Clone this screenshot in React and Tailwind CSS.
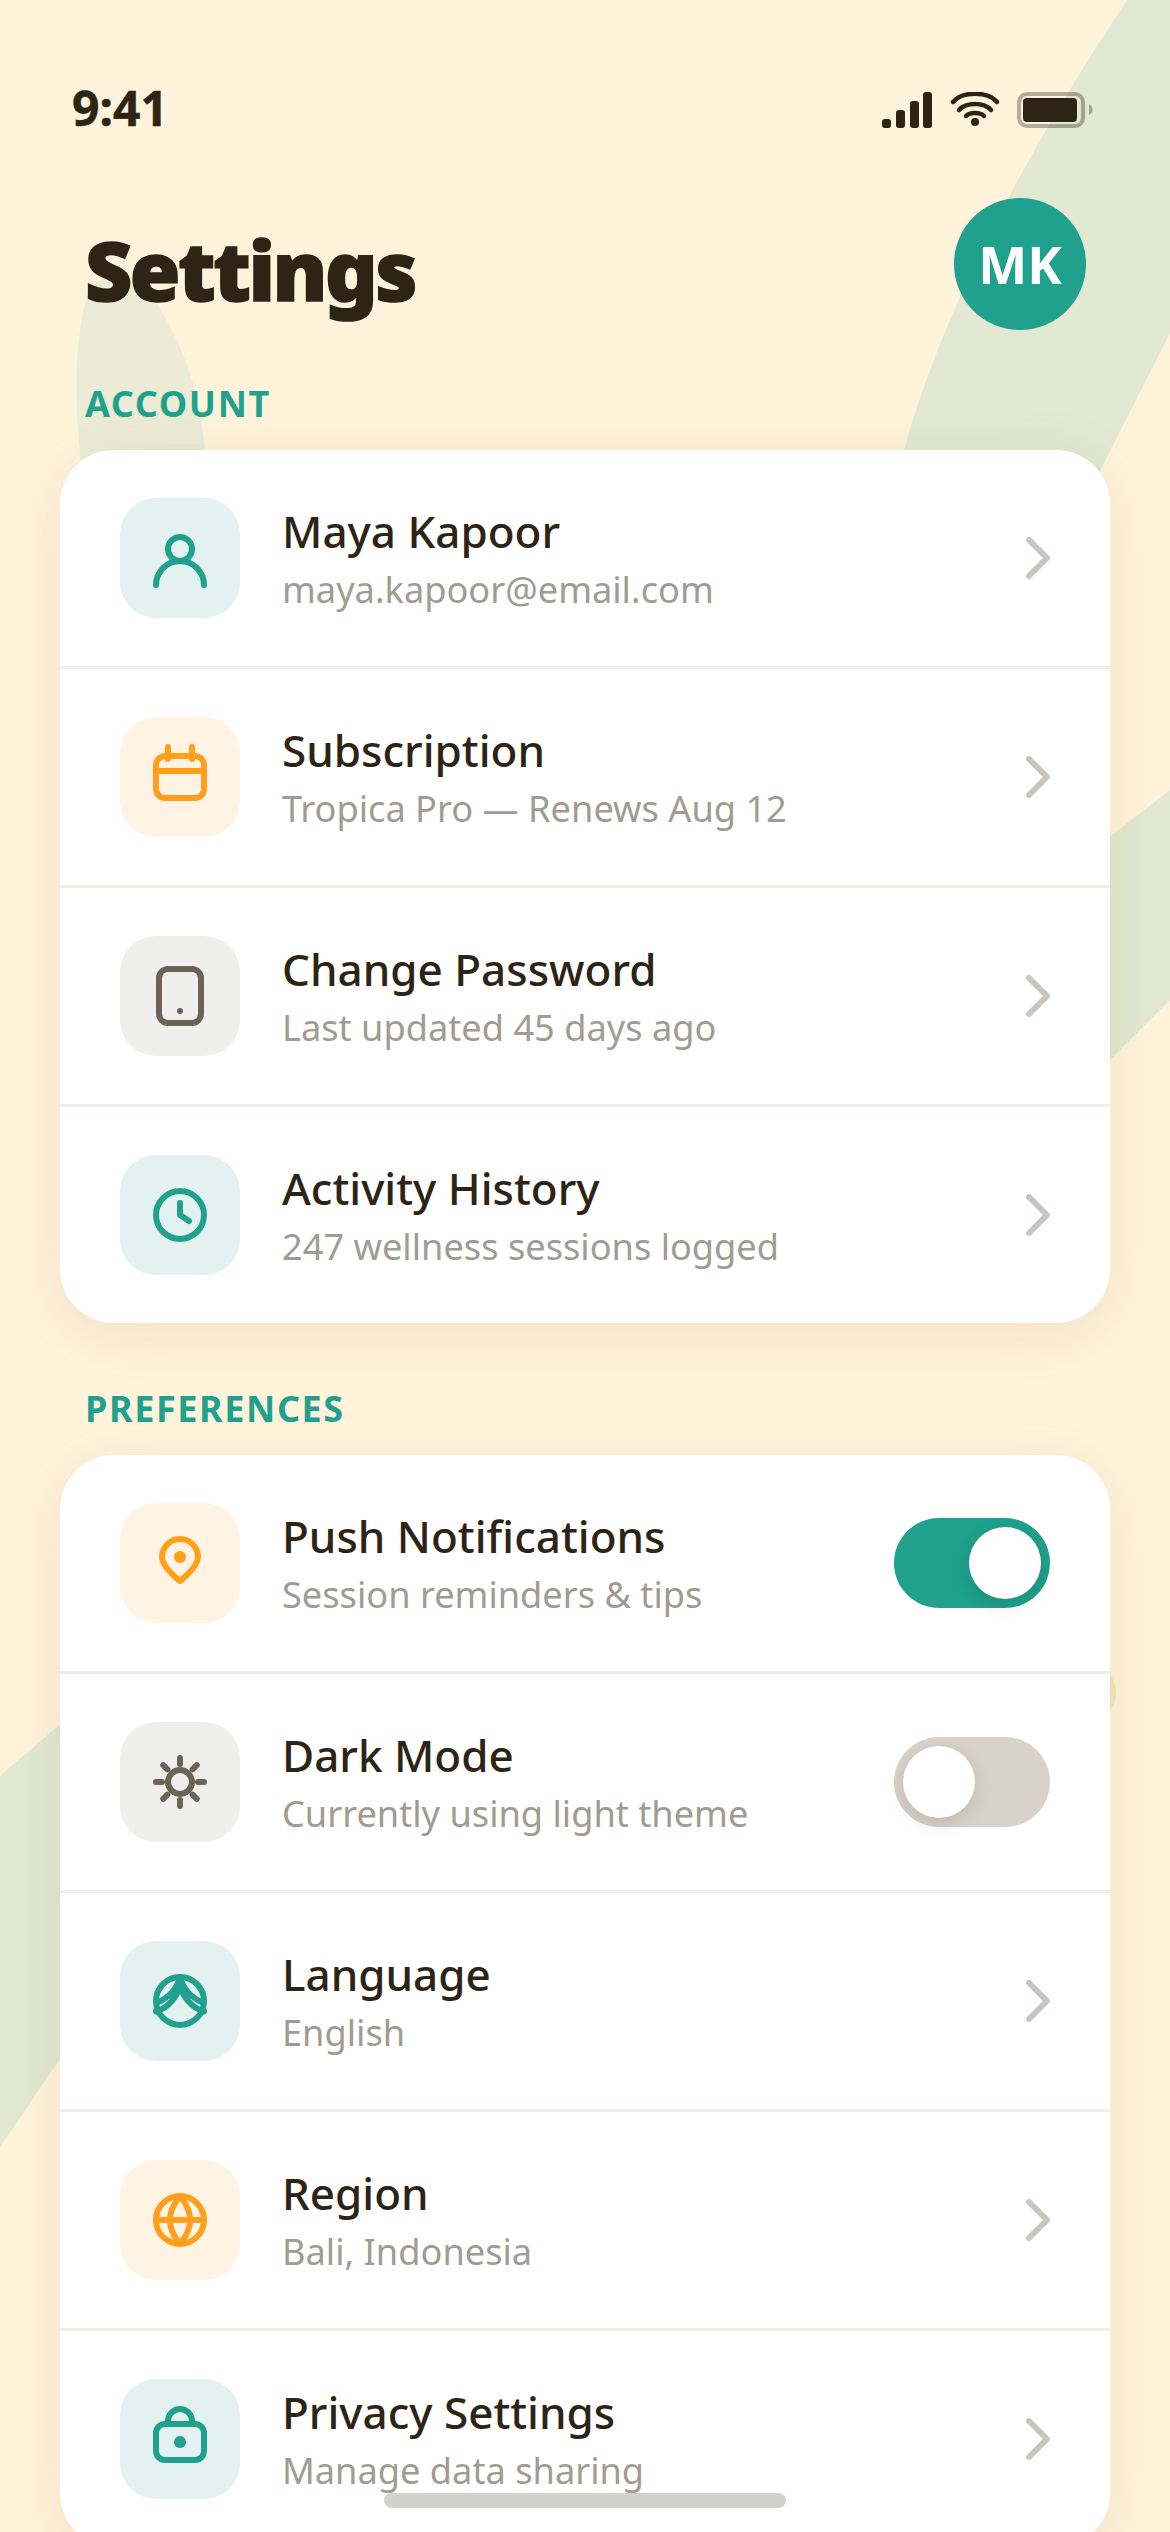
import React from 'react';

const TEAL = '#1FA18D';
const ORANGE = '#FF9F1C';
const GRAY = '#6B6358';

// base for the row icons, all drawn on a 24 grid at 72px
const Ico = ({ color, children }) => (
  <svg viewBox="0 0 24 24" className="w-[72px] h-[72px]" fill="none" stroke={color} strokeWidth="2" strokeLinecap="round" strokeLinejoin="round">
    {children}
  </svg>
);

const PersonIcon = () => (
  <Ico color={TEAL}>
    <circle cx="12" cy="9" r="4" />
    <path d="M4 21a8 8 0 0 1 16 0" />
  </Ico>
);
const CalendarIcon = () => (
  <Ico color={ORANGE}>
    <rect x="4" y="5" width="16" height="14" rx="3" />
    <path d="M8 2v4M16 2v4M4 10h16" />
  </Ico>
);
const PhoneIcon = () => (
  <Ico color={GRAY}>
    <rect x="5" y="3" width="14" height="18" rx="3" />
    <circle cx="12" cy="17" r="1" fill={GRAY} stroke="none" />
  </Ico>
);
const ClockIcon = () => (
  <Ico color={TEAL}>
    <circle cx="12" cy="12" r="8" />
    <path d="M12 8v4l3 2" />
  </Ico>
);
const PinIcon = () => (
  <Ico color={ORANGE}>
    <path d="M12 18s-6-4.500-6-8a6 6 0 1 1 12 0c0 3.500-6 8-6 8z" />
    <circle cx="12" cy="10" r="2" fill={ORANGE} stroke="none" />
  </Ico>
);
const SunIcon = () => (
  <Ico color={GRAY}>
    <circle cx="12" cy="12" r="4" />
    <path d="M12 4v2M12 18v2M4 12h2M18 12h2M6.400 6.400l1.400 1.400M16.200 16.200l1.400 1.400M6.400 17.600l1.400-1.400M16.200 7.800l1.400-1.400" />
  </Ico>
);
const LanguageIcon = () => (
  <Ico color={TEAL}>
    <circle cx="12" cy="12" r="8" />
    <path d="M12 4C11 8 8 11 4.500 12.500M12 4C13 8 16 11 19.500 12.500M12 7C11 10.500 8 14.500 4 15.500M12 7C13 10.500 16 14.500 20 15.500" />
  </Ico>
);
const GlobeIcon = () => (
  <Ico color={ORANGE}>
    <circle cx="12" cy="12" r="8" />
    <path d="M4 12h16M12 4c-2 2.500-3.400 5-3.400 8s1.400 5.500 3.400 8c2-2.500 3.400-5 3.400-8s-1.400-5.500-3.400-8z" />
  </Ico>
);
const LockIcon = () => (
  <Ico color={TEAL}>
    <rect x="4" y="7" width="16" height="12" rx="3" />
    <path d="M8 7V6a4 4 0 0 1 8 0v1" />
    <circle cx="12" cy="13" r="2" fill={TEAL} stroke="none" />
  </Ico>
);

const Chevron = () => (
  <svg viewBox="8 5 8 14" className="w-[24px] h-[42px]" fill="none" stroke="#C9C6C0" strokeWidth="2" strokeLinecap="round" strokeLinejoin="round">
    <path d="M9 18l6-6-6-6" />
  </svg>
);

const Toggle = ({ on }) => (
  <div className={`w-[156px] h-[90px] rounded-full p-[9px] flex ${on ? 'bg-[#1FA18D] justify-end' : 'bg-[#D8D2C8] justify-start'}`}>
    <div className="w-[72px] h-[72px] rounded-full bg-white shadow-[0_6px_18px_rgba(0,0,0,0.12)]" />
  </div>
);

const tileBg = {
  teal: 'bg-[#E3F2F0]',
  orange: 'bg-[#FFF3E4]',
  gray: 'bg-[#EFEFED]',
};

const Row = ({ icon, tint, title, sub, toggle, last }) => (
  <div className={`flex items-center pl-[60px] pr-[60px] py-[48px] ${last ? '' : 'border-b-[3px] border-[#F0EDE5]'}`}>
    <div className={`w-[120px] h-[120px] rounded-[36px] flex items-center justify-center shrink-0 ${tileBg[tint]}`}>
      {icon}
    </div>
    <div className="flex-1 ml-[42px] min-w-0">
      <p className="text-[44px] leading-[54px] font-medium text-[#2D2416]">{title}</p>
      <p className="text-[36.2px] leading-[48px] mt-[7px] text-[#A09C94]">{sub}</p>
    </div>
    {toggle === undefined ? <Chevron /> : <Toggle on={toggle} />}
  </div>
);

const SectionLabel = ({ children, className }) => (
  <p className={`pl-[85px] text-[36px] leading-[48px] font-bold tracking-[1.6px] text-[#1FA18D] ${className}`}>{children}</p>
);

const Card = ({ children }) => (
  <div className="mx-[60px] mt-[22px] rounded-[54px] bg-white overflow-hidden shadow-[0_12px_60px_rgba(140,110,40,0.12)]">
    {children}
  </div>
);

const Backdrop = () => (
  <svg viewBox="0 0 1170 2532" className="absolute inset-0 w-[1170px] h-[2532px]">
    <path d="M1127 0 C1040 130 945 300 904 450 L895 520 L1075 520 L1170 333 L1170 0 Z" fill="#E2E8D2" />
    <path d="M82 470 C74 400 74 340 88 292 C105 265 140 270 158 305 C185 350 204 400 206 470 Z" fill="#EBEBD6" />
    <path d="M1170 790 L1080 860 L1080 1090 L1170 1000 Z" fill="#E2E8D2" />
    <path d="M0 1776 L100 1690 L100 2000 L0 2147 Z" fill="#E2E8D2" />
    <circle cx="1085" cy="1693" r="31" fill="#F5E4BC" />
  </svg>
);

export default function App() {
  return (
    <div className="relative w-[1170px] h-[2532px] overflow-hidden bg-[#FFF3DC] font-['Noto_Sans',sans-serif]">
      <Backdrop />

      <div className="relative">
        {/* status bar */}
        <div className="flex items-center justify-between pl-[72px] pr-[75px] pt-[78px] h-[138px]">
          <span className="text-[48px] leading-[60px] font-bold text-[#2D2416] [-webkit-text-stroke:0.5px_#2D2416]">9:41</span>
          <svg viewBox="0 0 213 36" className="w-[213px] h-[36px] mt-[3px]">
            <rect x="0" y="27" width="9" height="9" rx="3" fill="#2D2416" />
            <rect x="14" y="18" width="9" height="18" rx="3" fill="#2D2416" />
            <rect x="28" y="9" width="9" height="27" rx="3" fill="#2D2416" />
            <rect x="41" y="0" width="9" height="36" rx="3" fill="#2D2416" />
            <g fill="none" stroke="#2D2416" strokeWidth="4.500" strokeLinecap="round">
              <path d="M71 10 C80 -1 106 -1 115 10" />
              <path d="M77 18 C84 10 102 10 109 18" />
              <path d="M84 24 C88 20 98 20 102 24" />
            </g>
            <circle cx="93" cy="30" r="4" fill="#2D2416" />
            <rect x="137" y="2" width="64" height="32" rx="8" fill="none" stroke="#2D2416" strokeOpacity="0.35" strokeWidth="4" />
            <rect x="141" y="6" width="54" height="24" rx="4" fill="#2D2416" />
            <path d="M207 12 a6 6 0 0 1 0 11z" fill="#2D2416" fillOpacity="0.35" />
          </svg>
        </div>

        {/* header */}
        <div className="flex items-start justify-between h-[132px] pl-[85px] pr-[84px] mt-[60px]">
          <h1 className="text-[82px] leading-[142px] font-black tracking-[-2.5px] text-[#2D2416] [-webkit-text-stroke:1.5px_#2D2416]">Settings</h1>
          <div className="w-[132px] h-[132px] rounded-full bg-[#1FA18D] flex items-center justify-center text-[52px] font-bold text-white">MK</div>
        </div>

        <SectionLabel className="mt-[50px]">ACCOUNT</SectionLabel>
        <Card>
          <Row icon={<PersonIcon />} tint="teal" title="Maya Kapoor" sub="maya.kapoor@email.com" />
          <Row icon={<CalendarIcon />} tint="orange" title="Subscription" sub="Tropica Pro — Renews Aug 12" />
          <Row icon={<PhoneIcon />} tint="gray" title="Change Password" sub="Last updated 45 days ago" />
          <Row icon={<ClockIcon />} tint="teal" title="Activity History" sub="247 wellness sessions logged" last />
        </Card>

        <SectionLabel className="mt-[62px]">PREFERENCES</SectionLabel>
        <Card>
          <Row icon={<PinIcon />} tint="orange" title="Push Notifications" sub="Session reminders & tips" toggle={true} />
          <Row icon={<SunIcon />} tint="gray" title="Dark Mode" sub="Currently using light theme" toggle={false} />
          <Row icon={<LanguageIcon />} tint="teal" title="Language" sub="English" />
          <Row icon={<GlobeIcon />} tint="orange" title="Region" sub="Bali, Indonesia" />
          <Row icon={<LockIcon />} tint="teal" title="Privacy Settings" sub="Manage data sharing" last />
        </Card>
      </div>

      {/* home indicator */}
      <div className="absolute left-[384px] bottom-[24px] w-[402px] h-[15px] rounded-full bg-[#D3D1CC]" />
    </div>
  );
}
